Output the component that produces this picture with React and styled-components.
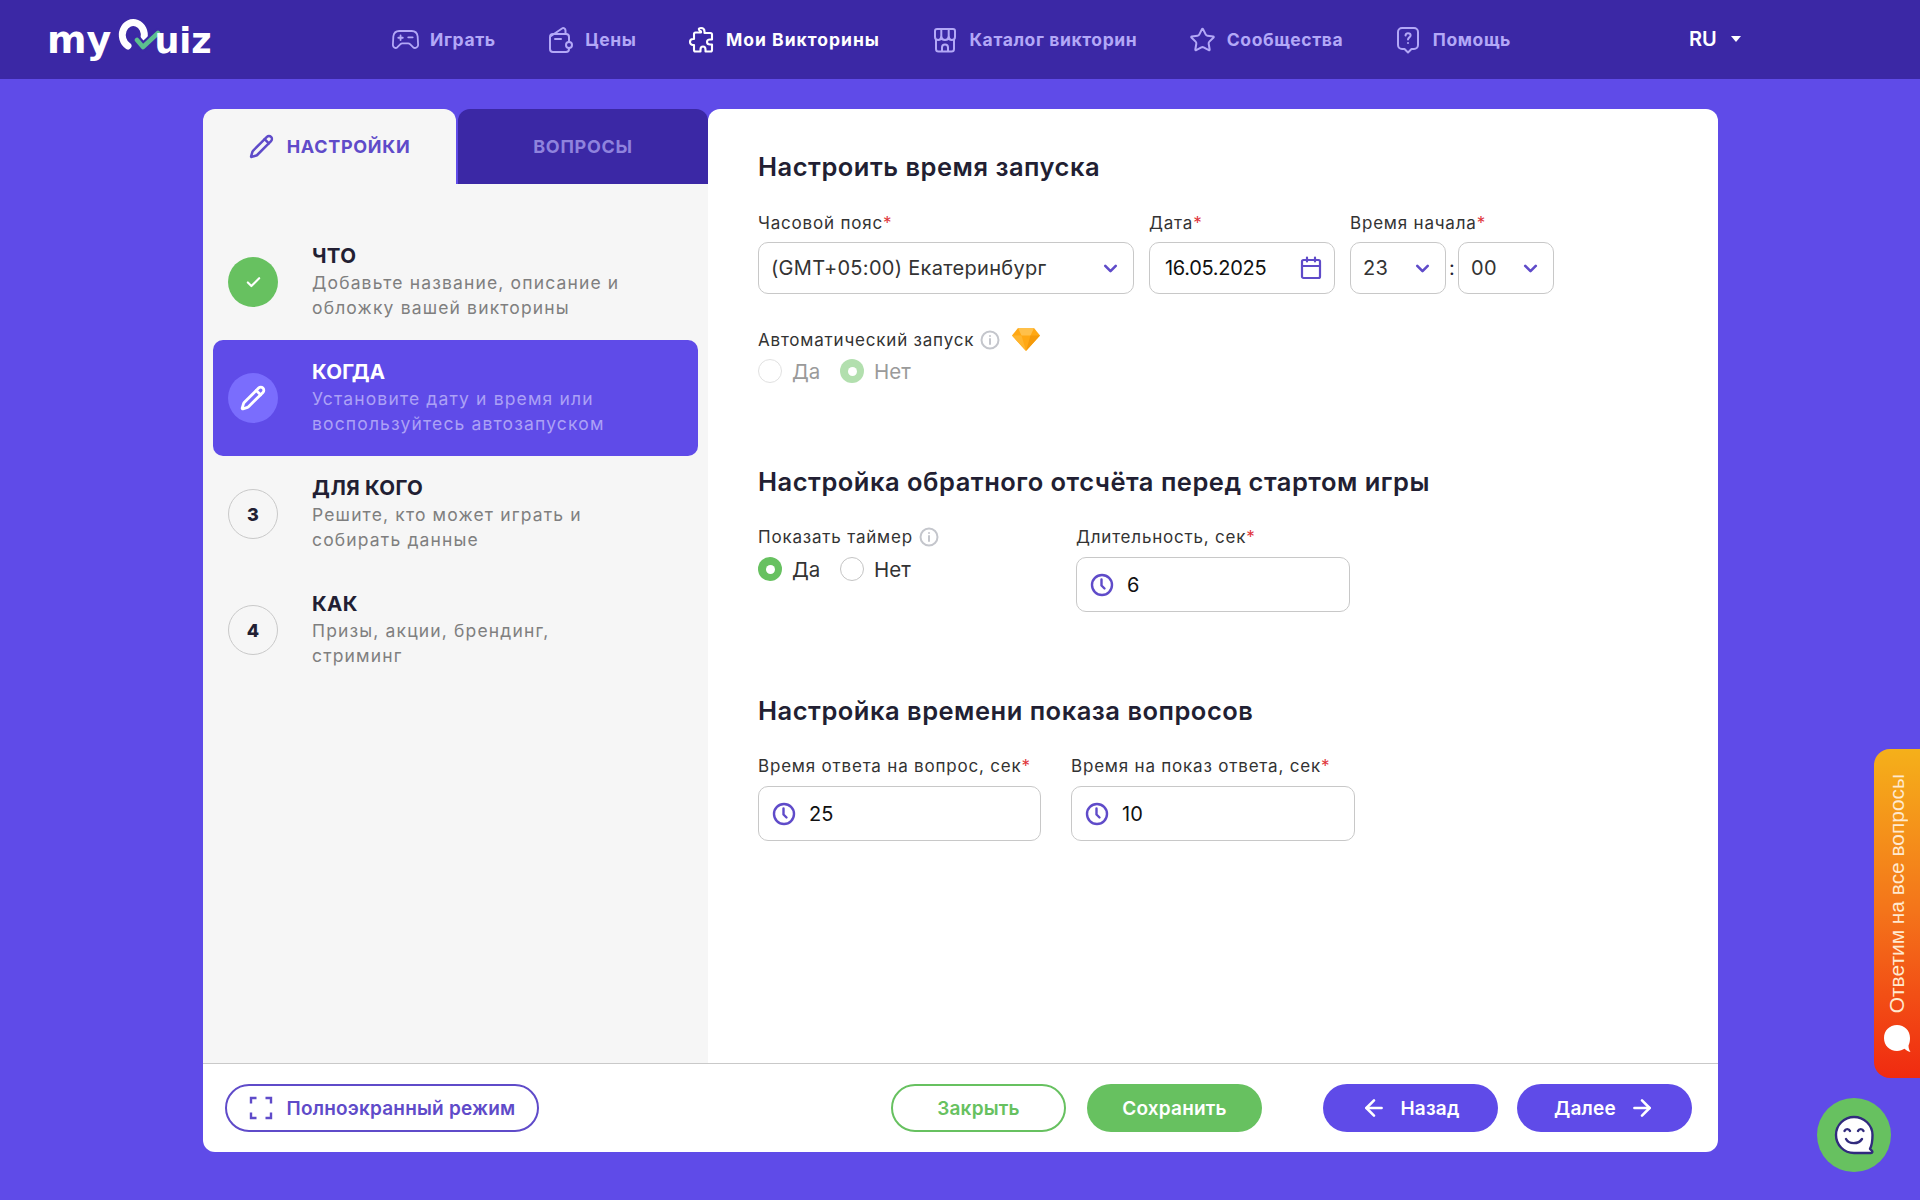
import React from "react";
import styled, { createGlobalStyle } from "styled-components";
import { Pencil, Check, ChevronDown, ArrowLeft, ArrowRight, Star } from "lucide-react";

const GlobalStyle = createGlobalStyle`
  html, body { margin: 0; padding: 0; background: #5f4be8; }
  body { font-family: Inter, "Noto Sans", sans-serif; color: #221f33; }
  * { box-sizing: border-box; }
`;

const GameIcon = () => (
  <svg width="30" height="24" viewBox="0 0 30 24" fill="none" stroke="currentColor" strokeWidth="2" strokeLinecap="round" strokeLinejoin="round">
    <path d="M8 2h14c3.600 0 6 2.400 6.500 6l.5 9c.2 3-3.200 5-5.600 3l-3.400-3.500c-.6-.6-1.200-.8-2-.8h-6.600c-.8 0-1.500.3-2 .8L6 20c-2.400 2-5.200 0-5-3l.5-9C2 4.400 4.400 2 8 2z" />
    <path d="M7 9.500h5M9.500 7v5M18 9h5" />
  </svg>
);

const WalletIcon = () => (
  <svg width="26" height="28" viewBox="0 0 26 28" fill="none" stroke="currentColor" strokeWidth="2" strokeLinecap="round" strokeLinejoin="round">
    <path d="M3 10l11-7.500c1.500-1 3.500 0 3.500 2V8" />
    <path d="M21 16V11c0-1.700-1.300-3-3-3H5c-1.700 0-3 1.300-3 3v12c0 1.700 1.300 3 3 3h13c1.700 0 3-1.300 3-3v-1" />
    <path d="M7 13h6" />
    <circle cx="21" cy="19" r="3" />
  </svg>
);

const PuzzleIcon = () => (
  <svg width="27" height="28" viewBox="0 0 27 28" fill="none" stroke="currentColor" strokeWidth="2.100" strokeLinecap="round" strokeLinejoin="round">
    <path d="M13 2c2.500 0 3.500 1.500 3.500 3.500v1.500h6c1 0 1.500.5 1.500 1.500v5h-2c-2 0-3 1-3 2.500s1 2.500 3 2.500h2v5.500c0 1-.5 1.500-1.500 1.500h-5v-2c0-2-1-3-2.500-3s-2.500 1-2.500 3v2h-5c-1 0-1.500-.5-1.500-1.500v-5h-1c-2 0-3-1.500-3-3s1-3 3-3h1v-5c0-1 .5-1.500 1.500-1.500h5.500V5.500C9.500 3.500 10.500 2 13 2z" />
  </svg>
);

const StoreIcon = () => (
  <svg width="24" height="26" viewBox="0 0 24 26" fill="none" stroke="currentColor" strokeWidth="2" strokeLinecap="round" strokeLinejoin="round">
    <path d="M4 2h16c1 0 2 1 2 2v6c0 2-1.500 3-3.300 3S16 12 15.700 10c-.3 2-1.800 3-3.700 3s-3.400-1-3.700-3C8 12 7 13 5.300 13S2 12 2 10V4c0-1 1-2 2-2z" />
    <path d="M8.300 2v8M15.700 2v8" />
    <path d="M3 13v9c0 1.500 1 2.500 2.500 2.500h13c1.500 0 2.500-1 2.500-2.500v-9" />
    <path d="M9 24v-3.500c0-1.600 1.300-3 3-3s3 1.400 3 3V24" />
  </svg>
);

const HelpIcon = () => (
  <svg width="24" height="28" viewBox="0 0 24 28" fill="none" stroke="currentColor" strokeWidth="2" strokeLinecap="round" strokeLinejoin="round">
    <path d="M6 2h12c2.200 0 4 1.800 4 4v13c0 2.200-1.800 4-4 4h-2.500L12 26.500 8.500 23H6c-2.200 0-4-1.800-4-4V6c0-2.200 1.800-4 4-4z" />
    <path d="M9.500 9.500C9.700 8 10.700 7.200 12 7.200c1.500 0 2.600 1 2.600 2.300 0 1.800-2.600 2-2.600 4" />
    <path d="M12 17h.01" />
  </svg>
);

const CalendarIcon = () => (
  <svg width="22" height="24" viewBox="0 0 22 24" fill="none" stroke="#5f4bc9" strokeWidth="2.200" strokeLinecap="round">
    <rect x="2" y="4" width="18" height="18" rx="1.500" />
    <path d="M2 10h18M7 1.500v4M15 1.500v4" />
  </svg>
);

const ClockIcon = () => (
  <svg width="24" height="24" viewBox="0 0 24 24" fill="none" stroke="#5f4bc9" strokeWidth="2.400" strokeLinecap="round" strokeLinejoin="round">
    <circle cx="12" cy="12" r="10" />
    <path d="M11.500 6.500v6l3 3" />
  </svg>
);

const InfoIcon = () => (
  <svg width="20" height="20" viewBox="0 0 20 20" fill="none" stroke="#c4c6cc" strokeWidth="2" strokeLinecap="round">
    <circle cx="10" cy="10" r="8.500" />
    <path d="M10 9v5M10 6h.01" />
  </svg>
);

const GemIcon = () => (
  <svg width="28" height="24" viewBox="0 0 28 24">
    <path d="M6 1h16l6 7.500L14 24 0 8.500z" fill="#ffa814" />
    <path d="M6 1h16l-3.500 7.500h-9z" fill="#ffc04a" />
    <path d="M0 8.500h9.500L14 24z" fill="#ffb52e" />
    <path d="M28 8.500h-9.500L14 24z" fill="#f59a0a" />
  </svg>
);

const FullscreenIcon = () => (
  <svg width="24" height="24" viewBox="0 0 24 24" fill="none" stroke="#5f4bc9" strokeWidth="2.400">
    <path d="M7.500 2H2v5.500M16.500 2H22v5.500M7.500 22H2v-5.500M16.500 22H22v-5.500" />
  </svg>
);

const BubbleIcon = () => (
  <svg width="30" height="32" viewBox="0 0 30 32" fill="#fff">
    <path d="M15 2C7.500 2 2 7.500 2 15s5.500 13 13 13c3 0 5.500-1 7.500-2.200 1.500 1.500 3.500 2.700 6 3.200-1.300-2-2-4-2-6.500 1-2 1.500-5 1.500-7.500C28 7.500 22.500 2 15 2z" />
  </svg>
);

const SmileIcon = () => (
  <svg width="42" height="42" viewBox="0 0 42 42" fill="#fff" stroke="#312a7d" strokeWidth="2.400" strokeLinecap="round" strokeLinejoin="round">
    <path d="M21 3C11 3 3 11 3 21s8 18 18 18h17c1.500 0 1.800-1.500.8-2.400l-1.800-1.800C39 31 39.500 26 39.500 21 39.500 11 31 3 21 3z" />
    <path d="M11.500 17c1-2.500 4.500-2.500 5.500 0M25 17c1-2.500 4.500-2.500 5.500 0M13 25c3 5.500 12.500 5.500 16 0" fill="none" />
  </svg>
);

const navItems = [
  { label: "Играть", icon: <GameIcon /> },
  { label: "Цены", icon: <WalletIcon /> },
  { label: "Мои Викторины", icon: <PuzzleIcon />, active: true },
  { label: "Каталог викторин", icon: <StoreIcon /> },
  { label: "Сообщества", icon: <Star size={28} strokeWidth={1.8} /> },
  { label: "Помощь", icon: <HelpIcon /> },
];

const steps = [
  { title: "ЧТО", lines: ["Добавьте название, описание и", "обложку вашей викторины"], state: "done" },
  { title: "КОГДА", lines: ["Установите дату и время или", "воспользуйтесь автозапуском"], state: "active" },
  { title: "ДЛЯ КОГО", lines: ["Решите, кто может играть и", "собирать данные"], num: 3 },
  { title: "КАК", lines: ["Призы, акции, брендинг,", "стриминг"], num: 4 },
];

const Radio = ({ checked, disabled, children }) => (
  <RadioItem $disabled={disabled}>
    <RadioDot $checked={checked} $disabled={disabled} />
    {children}
  </RadioItem>
);

const Field = ({ label, required = true, width, children, info }) => (
  <FieldBox $width={width}>
    <Label>
      {label}
      {required && <Req>*</Req>}
      {info && <InfoIcon />}
    </Label>
    {children}
  </FieldBox>
);

const App = () => {
  return (
    <Page>
      <GlobalStyle />
      <Header>
        <Logo>
          <LogoText $wide>my</LogoText>
          <LogoMark width="46" height="42" viewBox="0 0 46 42" fill="none" strokeLinecap="round" strokeLinejoin="round">
            <path d="M13 29A11 12.500 0 1 1 29 21" stroke="#fff" strokeWidth="7" />
            <path d="M22 23l6 7 15-14" stroke="#3b28a5" strokeWidth="9" />
            <path d="M22 23l6 7 15-14" stroke="#5cc08e" strokeWidth="4.500" />
          </LogoMark>
          <LogoText>uiz</LogoText>
        </Logo>
        <Nav>
          {navItems.map((item) => (
            <NavItem key={item.label} $active={item.active}>
              <NavIcon>{item.icon}</NavIcon>
              {item.label}
            </NavItem>
          ))}
        </Nav>
        <Lang>
          RU
          <Caret />
        </Lang>
      </Header>

      <Card>
        <CardBody>
          <Side>
            <Tabs>
              <Tab $active>
                <Pencil size={25} strokeWidth={2.4} />
                НАСТРОЙКИ
              </Tab>
              <Tab>ВОПРОСЫ</Tab>
            </Tabs>
            <Steps>
              {steps.map((step) => (
                <Step key={step.title} $active={step.state === "active"}>
                  <StepCircle $state={step.state}>
                    {step.state === "done" && <Check size={17} strokeWidth={3} />}
                    {step.state === "active" && <Pencil size={26} strokeWidth={2.6} />}
                    {step.num}
                  </StepCircle>
                  <div>
                    <StepTitle>{step.title}</StepTitle>
                    {step.lines.map((line) => (
                      <StepLine key={line} $active={step.state === "active"}>{line}</StepLine>
                    ))}
                  </div>
                </Step>
              ))}
            </Steps>
          </Side>

          <Content>
            <SectionTitle>Настроить время запуска</SectionTitle>
            <Row>
              <Field label="Часовой пояс" width="376px">
                <Box>
                  (GMT+05:00) Екатеринбург
                  <Chevron><ChevronDown size={21} strokeWidth={3} /></Chevron>
                </Box>
              </Field>
              <Field label="Дата" width="186px">
                <Box $dark $pad="15px">
                  16.05.2025
                  <Chevron><CalendarIcon /></Chevron>
                </Box>
              </Field>
              <Field label="Время начала">
                <TimeGroup>
                  <Box $small>
                    23
                    <Chevron><ChevronDown size={21} strokeWidth={3} /></Chevron>
                  </Box>
                  <Colon>:</Colon>
                  <Box $small>
                    00
                    <Chevron><ChevronDown size={21} strokeWidth={3} /></Chevron>
                  </Box>
                </TimeGroup>
              </Field>
            </Row>

            <AutoRow>
              <Label>
                Автоматический запуск
                <InfoIcon />
                <GemWrap><GemIcon /></GemWrap>
              </Label>
              <Radios>
                <Radio disabled>Да</Radio>
                <Radio disabled checked>Нет</Radio>
              </Radios>
            </AutoRow>

            <Section>
              <SectionTitle>Настройка обратного отсчёта перед стартом игры</SectionTitle>
              <Row $gap="0">
                <FieldBox $width="318px">
                  <Label>
                    Показать таймер
                    <InfoIcon />
                  </Label>
                  <Radios>
                    <Radio checked>Да</Radio>
                    <Radio>Нет</Radio>
                  </Radios>
                </FieldBox>
                <Field label="Длительность, сек" width="274px">
                  <Box $tall $clock>
                    <ClockIcon />
                    6
                  </Box>
                </Field>
              </Row>
            </Section>

            <Section>
              <SectionTitle>Настройка времени показа вопросов</SectionTitle>
              <Row $gap="30px">
                <Field label="Время ответа на вопрос, сек" width="283px">
                  <Box $tall $clock>
                    <ClockIcon />
                    25
                  </Box>
                </Field>
                <Field label="Время на показ ответа, сек" width="284px">
                  <Box $tall $clock>
                    <ClockIcon />
                    10
                  </Box>
                </Field>
              </Row>
            </Section>
          </Content>
        </CardBody>

        <Footer>
          <OutlineButton>
            <FullscreenIcon />
            Полноэкранный режим
          </OutlineButton>
          <FooterRight>
            <GreenOutline>Закрыть</GreenOutline>
            <GreenButton>Сохранить</GreenButton>
            <NavButton $first>
              <ArrowLeft size={26} strokeWidth={2.4} />
              Назад
            </NavButton>
            <NavButton $last>
              Далее
              <ArrowRight size={26} strokeWidth={2.4} />
            </NavButton>
          </FooterRight>
        </Footer>
      </Card>

      <HelpTab>
        <HelpText>Ответим на все вопросы</HelpText>
        <BubbleIcon />
      </HelpTab>
      <ChatButton>
        <SmileIcon />
      </ChatButton>
    </Page>
  );
};

const Page = styled.div`
  position: relative;
  height: 1200px;
  overflow: hidden;
  background: #5f4be8;
`;

const Header = styled.header`
  display: flex;
  align-items: center;
  height: 79px;
  padding-left: 47px;
  background: #3b28a5;
`;

const Logo = styled.div`
  display: flex;
  align-items: center;
  width: 345px;
`;

const LogoText = styled.span`
  font-family: "DejaVu Sans", sans-serif;
  font-weight: 700;
  font-size: ${(p) => (p.$wide ? "38px" : "35px")};
  line-height: 40px;
  color: #fff;
  margin-top: ${(p) => (p.$wide ? "0" : "2px")};
`;

const LogoMark = styled.svg`
  flex: none;
  margin: -4px -7px 0 4px;
`;

const Nav = styled.nav`
  display: flex;
  align-items: center;
  gap: 51.5px;
`;

const NavItem = styled.a`
  display: flex;
  align-items: center;
  gap: 11px;
  font-size: 17.5px;
  font-weight: 700;
  letter-spacing: ${(p) => (p.$active ? "1px" : "0.6px")};
  white-space: nowrap;
  color: ${(p) => (p.$active ? "#fff" : "#b3a8f7")};
`;

const NavIcon = styled.span`
  display: flex;
  align-items: center;
  justify-content: center;
  width: 27px;
`;

const Lang = styled.div`
  position: absolute;
  left: 1689px;
  top: 27px;
  display: flex;
  align-items: center;
  gap: 14px;
  height: 24px;
  font-size: 20px;
  font-weight: 600;
  color: #fff;
`;

const Caret = styled.span`
  width: 0;
  height: 0;
  border-left: 5px solid transparent;
  border-right: 5px solid transparent;
  border-top: 6px solid #fff;
`;

const Card = styled.main`
  display: flex;
  flex-direction: column;
  width: 1515px;
  height: 1043px;
  margin: 30px 0 0 203px;
`;

const CardBody = styled.div`
  display: flex;
  flex: 1;
  min-height: 0;
`;

const Side = styled.aside`
  display: flex;
  flex-direction: column;
  width: 505px;
`;

const Tabs = styled.div`
  display: flex;
  gap: 2px;
  height: 75px;
`;

const Tab = styled.div`
  flex: ${(p) => (p.$active ? "0 0 253px" : "1")};
  display: flex;
  align-items: center;
  justify-content: center;
  gap: 13px;
  border-radius: 12px 12px 0 0;
  font-size: 18px;
  font-weight: 700;
  letter-spacing: 0.7px;
  background: ${(p) => (p.$active ? "#f6f6f6" : "#3b28a5")};
  color: ${(p) => (p.$active ? "#5f4bc9" : "#8f83dd")};
`;

const Steps = styled.div`
  flex: 1;
  padding: 40px 10px 0;
  background: #f6f6f6;
`;

const Step = styled.div`
  display: flex;
  align-items: center;
  gap: 34px;
  height: 116px;
  padding-left: 15px;
  border-radius: 10px;
  background: ${(p) => (p.$active ? "#5f4be8" : "transparent")};
  color: ${(p) => (p.$active ? "#fff" : "#221f33")};
`;

const StepCircle = styled.div`
  flex: 0 0 50px;
  display: flex;
  align-items: center;
  justify-content: center;
  height: 50px;
  border-radius: 50%;
  font-size: 18px;
  font-weight: 800;
  color: ${(p) => (p.$state ? "#fff" : "#221f33")};
  background: ${(p) => (p.$state === "done" ? "#67c160" : p.$state === "active" ? "#7a6dfd" : "transparent")};
  border: ${(p) => (p.$state ? "0" : "1px solid #c9c9c9")};
`;

const StepTitle = styled.div`
  font-size: 20.5px;
  font-weight: 700;
  line-height: 25px;
  margin: -1px 0 2px;
  letter-spacing: 0.3px;
`;

const StepLine = styled.div`
  font-size: 17.5px;
  line-height: 25px;
  letter-spacing: 1.15px;
  white-space: nowrap;
  color: ${(p) => (p.$active ? "#aca1f6" : "#7f7f7f")};
`;

const Content = styled.section`
  flex: 1;
  padding: 43px 0 0 50px;
  background: #fff;
  border-radius: 12px 12px 0 0;
`;

const SectionTitle = styled.h2`
  margin: 0 0 31px;
  font-size: 25.5px;
  font-weight: 600;
  line-height: 30px;
  color: #221f33;
  letter-spacing: 0.5px;
  white-space: nowrap;
`;

const Row = styled.div`
  display: flex;
  gap: ${(p) => p.$gap ?? "15px"};
`;

const FieldBox = styled.div`
  width: ${(p) => p.$width ?? "auto"};
`;

const Label = styled.div`
  display: flex;
  align-items: center;
  height: 20px;
  margin-bottom: 9px;
  font-size: 17px;
  letter-spacing: 0.8px;
  white-space: nowrap;
  color: #333;
  svg {
    margin-left: 6px;
  }
`;

const Section = styled.div`
  margin-top: 84px;
  ${SectionTitle} {
    margin-bottom: 30px;
  }
  ${Label} {
    margin-bottom: 10px;
  }
`;

const Req = styled.span`
  color: #e0343a;
`;

const Box = styled.div`
  display: flex;
  align-items: center;
  gap: ${(p) => (p.$clock ? "13px" : "0")};
  width: ${(p) => (p.$small ? "96px" : "100%")};
  height: ${(p) => (p.$tall ? "55px" : "52px")};
  padding: 0 12px 0 ${(p) => (p.$clock ? "13px" : p.$pad ?? "12px")};
  border: 1px solid #c8c8c8;
  border-radius: 10px;
  font-size: 20px;
  letter-spacing: ${(p) => (p.$dark ? "-0.3px" : p.$clock ? "0" : "0.3px")};
  white-space: nowrap;
  color: ${(p) => (p.$dark || p.$clock ? "#111" : "#333")};
`;

const Chevron = styled.span`
  display: flex;
  margin-left: auto;
  color: #5f4bc9;
`;

const TimeGroup = styled.div`
  display: flex;
  align-items: center;
`;

const Colon = styled.span`
  width: 12px;
  text-align: center;
  font-size: 20px;
`;

const AutoRow = styled.div`
  margin-top: 36px;
`;

const GemWrap = styled.span`
  display: flex;
  margin: -3px 0 0 6px;
`;

const Radios = styled.div`
  display: flex;
  margin-top: 9px;
`;

const RadioItem = styled.label`
  display: flex;
  align-items: center;
  gap: 10px;
  min-width: 82px;
  height: 24px;
  font-size: 20.5px;
  color: ${(p) => (p.$disabled ? "#9a9a9a" : "#333")};
`;

const RadioDot = styled.span`
  width: 24px;
  height: 24px;
  border-radius: 50%;
  background: ${(p) => (p.$checked ? "#67c160" : "#fff")};
  border: ${(p) => (p.$checked ? "0" : "1px solid #c4c4c4")};
  opacity: ${(p) => (p.$disabled ? 0.5 : 1)};
  display: flex;
  align-items: center;
  justify-content: center;
  &::after {
    content: "";
    display: ${(p) => (p.$checked ? "block" : "none")};
    width: 9px;
    height: 9px;
    border-radius: 50%;
    background: #fff;
  }
`;

const Footer = styled.footer`
  display: flex;
  align-items: center;
  justify-content: space-between;
  height: 89px;
  padding: 0 26px 0 22px;
  background: #fff;
  border-top: 1px solid #c9c9c9;
  border-radius: 0 0 12px 12px;
`;

const FooterRight = styled.div`
  display: flex;
  gap: 21px;
`;

const Pill = styled.button`
  display: flex;
  align-items: center;
  justify-content: center;
  gap: 13px;
  width: 175px;
  height: 48px;
  padding: 0;
  border-radius: 24px;
  font-family: inherit;
  font-size: 19px;
  font-weight: 600;
  letter-spacing: 0.2px;
`;

const OutlineButton = styled(Pill)`
  width: 314px;
  gap: 14px;
  background: #fff;
  border: 2px solid #5f4bc9;
  color: #5f4bc9;
`;

const GreenOutline = styled(Pill)`
  background: #fff;
  border: 2px solid #67c160;
  color: #67c160;
`;

const GreenButton = styled(Pill)`
  background: #67c160;
  border: 0;
  color: #fff;
`;

const NavButton = styled(Pill)`
  background: #5f4be8;
  border: 0;
  color: #fff;
  margin-left: ${(p) => (p.$first ? "40px" : p.$last ? "-2px" : "0")};
`;

const HelpTab = styled.div`
  position: absolute;
  right: 0;
  top: 749px;
  width: 46px;
  height: 329px;
  display: flex;
  flex-direction: column;
  align-items: center;
  padding-top: 25px;
  gap: 10px;
  border-radius: 16px 0 0 16px;
  background: linear-gradient(180deg, #f5b01a 0%, #f4731a 50%, #f02a10 100%);
`;

const HelpText = styled.span`
  writing-mode: vertical-rl;
  transform: rotate(180deg);
  font-family: "Liberation Sans", sans-serif;
  font-size: 20.9px;
  white-space: nowrap;
  color: #ffe9cf;
`;

const ChatButton = styled.div`
  position: absolute;
  left: 1817px;
  top: 1098px;
  width: 74px;
  height: 74px;
  display: flex;
  align-items: center;
  justify-content: center;
  border-radius: 50%;
  background: #67c160;
`;

export default App;
